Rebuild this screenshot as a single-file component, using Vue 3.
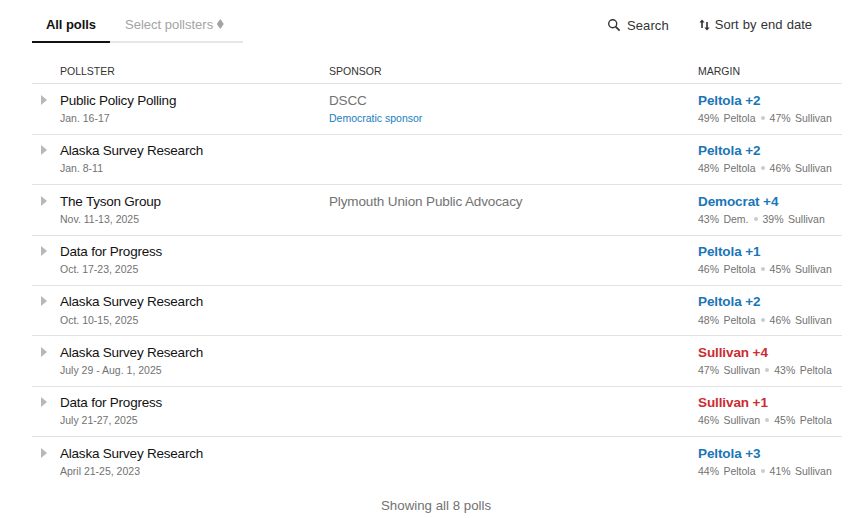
<script setup>
const polls = [
  { name: 'Public Policy Polling', date: 'Jan. 16-17', sponsor: 'DSCC', note: 'Democratic sponsor', margin: 'Peltola +2', party: 'dem', a: '49% Peltola', b: '47% Sullivan' },
  { name: 'Alaska Survey Research', date: 'Jan. 8-11', sponsor: '', note: '', margin: 'Peltola +2', party: 'dem', a: '48% Peltola', b: '46% Sullivan' },
  { name: 'The Tyson Group', date: 'Nov. 11-13, 2025', sponsor: 'Plymouth Union Public Advocacy', note: '', margin: 'Democrat +4', party: 'dem', a: '43% Dem.', b: '39% Sullivan' },
  { name: 'Data for Progress', date: 'Oct. 17-23, 2025', sponsor: '', note: '', margin: 'Peltola +1', party: 'dem', a: '46% Peltola', b: '45% Sullivan' },
  { name: 'Alaska Survey Research', date: 'Oct. 10-15, 2025', sponsor: '', note: '', margin: 'Peltola +2', party: 'dem', a: '48% Peltola', b: '46% Sullivan' },
  { name: 'Alaska Survey Research', date: 'July 29 - Aug. 1, 2025', sponsor: '', note: '', margin: 'Sullivan +4', party: 'rep', a: '47% Sullivan', b: '43% Peltola' },
  { name: 'Data for Progress', date: 'July 21-27, 2025', sponsor: '', note: '', margin: 'Sullivan +1', party: 'rep', a: '46% Sullivan', b: '45% Peltola' },
  { name: 'Alaska Survey Research', date: 'April 21-25, 2023', sponsor: '', note: '', margin: 'Peltola +3', party: 'dem', a: '44% Peltola', b: '41% Sullivan' }
]
</script>

<template>
  <div class="page">
    <div class="toolbar">
      <div class="tabs">
        <div class="tab active">All polls</div>
        <div class="tab select">Select pollsters <span class="updown"></span></div>
      </div>
      <div class="tools">
        <div class="tool search">
          <svg width="14" height="14" viewBox="0 0 14 14" fill="none" stroke="#333" stroke-width="1.4">
            <circle cx="5.7" cy="5.7" r="4" />
            <path d="M8.6 8.6L12.6 12.6" stroke-width="1.7" />
          </svg>
          <span class="search-label">Search</span>
        </div>
        <div class="tool sort">
          <svg width="11" height="12" viewBox="0 0 11 12" fill="#333">
            <path d="M3 0.5L5.6 3.6H3.8V9H2.2V3.6H0.4Z" />
            <path d="M8 11.5L5.4 8.4H7.2V3H8.8V8.4H10.6Z" />
          </svg>
          <span>Sort by end date</span>
        </div>
      </div>
    </div>

    <div class="row head">
      <div class="c-name">POLLSTER</div>
      <div class="c-sponsor">SPONSOR</div>
      <div class="c-margin">MARGIN</div>
    </div>

    <div class="rows">
      <div v-for="(p, i) in polls" :key="i" class="row poll">
        <span class="caret"></span>
        <div class="c-name">
          <div class="name">{{ p.name }}</div>
          <div class="sub">{{ p.date }}</div>
        </div>
        <div class="c-sponsor">
          <div class="sponsor">{{ p.sponsor }}</div>
          <div v-if="p.note" class="note">{{ p.note }}</div>
        </div>
        <div class="c-margin">
          <div class="margin" :class="p.party">{{ p.margin }}</div>
          <div class="sub stats">{{ p.a }}<span class="dot"></span>{{ p.b }}</div>
        </div>
      </div>
    </div>

    <div class="footer">Showing all 8 polls</div>
  </div>
</template>

<style scoped>
.page {
  width: 859px;
  height: 518px;
  padding: 0 17px 0 32px;
  box-sizing: border-box;
  overflow: hidden;
  background: #fff;
  font-family: "Liberation Sans", Arial, sans-serif;
  color: #121212;
}
.toolbar {
  display: flex;
  justify-content: space-between;
  height: 43px;
  margin-bottom: 19px;
}
.tabs {
  display: flex;
  width: 211px;
  height: 43px;
  box-sizing: border-box;
  border-bottom: 2px solid #e6e6e6;
}
.tab {
  font-size: 13px;
  line-height: 15px;
  padding-top: 17px;
  height: 43px;
  box-sizing: border-box;
}
.tab.active {
  width: 78px;
  text-align: center;
  font-weight: 700;
  letter-spacing: -0.05px;
  border-bottom: 2px solid #121212;
}
.tab.select {
  padding-left: 15px;
  color: #a3a3a3;
}
.updown {
  display: inline-block;
  width: 7px;
  height: 10px;
  background: #a3a3a3;
  clip-path: polygon(50% 0, 100% 50%, 50% 100%, 0 50%);
}
.tools {
  display: flex;
  padding-top: 17px;
  padding-right: 30px;
  font-size: 13px;
  line-height: 15px;
  color: #333;
}
.tool {
  display: flex;
  align-items: center;
  height: 15px;
}
.search {
  gap: 6px;
  margin-right: 30px;
}
.search-label {
  padding-top: 1px;
  letter-spacing: 0.1px;
}
.sort {
  gap: 5px;
  word-spacing: 0.6px;
}
.row {
  display: flex;
  border-bottom: 1px solid #e2e2e2;
  box-sizing: border-box;
  position: relative;
}
.head {
  height: 22.4px;
  padding-top: 3px;
  font-size: 10.5px;
  line-height: 13px;
  color: #333;
}
.poll {
  height: 50.4px;
  padding-top: 8.4px;
}
.poll:last-child {
  border-bottom: 0;
}
.c-name {
  width: 269px;
  margin-left: 28px;
}
.c-sponsor {
  width: 369px;
}
.c-margin {
  flex: 1;
}
.caret {
  position: absolute;
  left: 9px;
  top: 10.4px;
  width: 0;
  height: 0;
  border-left: 6px solid #b8b8b8;
  border-top: 5px solid transparent;
  border-bottom: 5px solid transparent;
}
.name,
.sponsor,
.margin {
  font-size: 13.5px;
  line-height: 16px;
}
.name {
  letter-spacing: -0.22px;
}
.sponsor {
  color: #727272;
  letter-spacing: -0.13px;
}
.sub,
.note {
  font-size: 10.5px;
  line-height: 12px;
  margin-top: 3.2px;
  color: #727272;
}
.stats {
  word-spacing: 1.5px;
}
.note {
  color: #1a7ec0;
}
.margin {
  font-weight: 700;
  letter-spacing: -0.1px;
}
.dem {
  color: #1a76b8;
}
.rep {
  color: #cb2c30;
}
.dot {
  display: inline-block;
  width: 4px;
  height: 4px;
  margin: 0 5px;
  border-radius: 50%;
  background: #ccc;
  vertical-align: 2px;
}
.footer {
  margin-top: 10px;
  padding-left: 349px;
  font-size: 13.3px;
  line-height: 16px;
  color: #727272;
}
</style>
